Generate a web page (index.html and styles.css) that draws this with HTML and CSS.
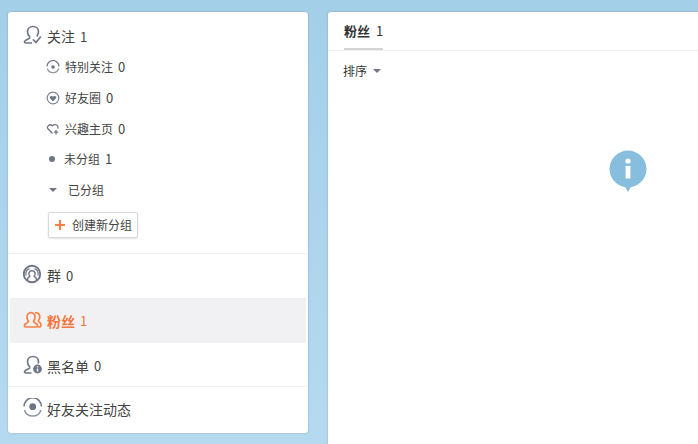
FILE: index.html
```html
<!DOCTYPE html>
<html lang="zh-CN">
<head>
    <meta charset="UTF-8">
    <title>粉丝</title>
    <link rel="stylesheet" href="styles.css">
</head>
<body>
    <div class="page">
        <!-- Left menu -->
        <div class="side">
            <div class="group follow-group">
                <div class="item">
                    <svg class="icon" width="22" height="22" viewBox="0 0 22 22" fill="none" stroke="#6d7587" stroke-width="1.700"><path d="M7 12.500C5.500 10.800 4.500 9 4.500 6.800 4.500 3.500 7 1.500 10 1.500s5.500 2 5.500 5.300c0 1.700-.6 3.200-1.700 4.700"/><path d="M7 12.500c0 1.500-5.500 2-5.500 4.300 0 .9.600 1.200 1.500 1.200h6"/><path d="M10 14.300l3 3.200 4.800-6"/></svg>
                    <span>关注</span><span class="num">1</span>
                </div>
                <div class="sub">
                    <svg class="sub-icon" width="14" height="14" viewBox="0 0 14 14" fill="none" stroke="#6d7587" stroke-width="1.200"><path d="M1 6.500a6 6 0 0 1 12 0"/><path d="M12.700 8.500a6 6 0 0 1-11.400 0" stroke="#8f95a3"/><circle cx="7" cy="7" r="1.800" fill="#6d7587" stroke="none"/></svg>
                    <span>特别关注</span><span class="num">0</span>
                </div>
                <div class="sub">
                    <svg class="sub-icon" width="14" height="14" viewBox="0 0 14 14" fill="none" stroke="#7d8494" stroke-width="1.200"><circle cx="7" cy="7" r="5.800"/><path d="M7 10.500L4 7.300c-1.100-1.500 1-3.400 3-1.700 2-1.700 4.100.2 3 1.700z" fill="#6d7587" stroke="none"/></svg>
                    <span>好友圈</span><span class="num">0</span>
                </div>
                <div class="sub">
                    <svg class="sub-icon" width="14" height="14" viewBox="0 0 14 14" fill="none" stroke="#6d7587" stroke-width="1.300"><path d="M6.500 11.500L2 6.800C.3 4.500 3.600 1.200 6.500 3.800 9 1.200 12.800 3.500 11.800 6.500"/><path d="M10 8v4.500M7.800 10.200h4.400"/></svg>
                    <span>兴趣主页</span><span class="num">0</span>
                </div>
                <div class="sub">
                    <span class="dot"></span>
                    <span>未分组</span><span class="num">1</span>
                </div>
                <div class="sub">
                    <span class="caret caret-wide"></span>
                    <span>已分组</span>
                </div>
                <button class="new-group"><span class="plus"></span>创建新分组</button>
            </div>
            <div class="group mid-group">
                <div class="item qun">
                    <svg class="icon" width="22" height="22" viewBox="0 0 22 22" fill="none" stroke="#6d7587" stroke-width="1.500"><circle cx="9" cy="10" r="8.200" stroke-width="1.900"/><path d="M4.700 16c-.4-1.800.2-2.700 2-3.700-1.800-2.400-.7-5.500 2.300-5.500s4.100 3.100 2.300 5.500c1.800 1 2.400 1.900 2 3.700"/><path d="M3 11.500C2.500 8 4 5.300 6.500 4.700M15 11.500c.5-3.500-1-6.200-3.500-6.800" stroke-width="1.200"/></svg>
                    <span>群</span><span class="num">0</span>
                </div>
                <div class="item active">
                    <svg class="icon" width="22" height="22" viewBox="0 0 22 22" fill="none" stroke="#fb7f45" stroke-width="1.700"><path d="M5.500 11.500C4.500 10 4 8.800 4 7.200 4 4.500 5.800 2.700 8 2.700s4 1.800 4 4.500c0 1.600-.5 2.800-1.500 4.300 0 1.200 3 1.500 3.800 3 .5 1 .2 2.500-1 2.500H2.700c-1.200 0-1.500-1.500-1-2.500.8-1.500 3.800-1.800 3.800-3z"/><path d="M12 2.900c2.500-.7 4.800 1 4.800 3.900 0 1.700-.5 2.900-1.500 4.200 0 1 2 1.300 2.500 2.800.4 1.300 0 3.200-1.400 3.200h-1.400"/></svg>
                    <span class="bold">粉丝</span><span class="num">1</span>
                </div>
                <div class="item black">
                    <svg class="icon" width="22" height="22" viewBox="0 0 22 22" fill="none" stroke="#6d7587" stroke-width="1.700"><path d="M7 12.500C5.500 10.800 4.500 9 4.500 6.800 4.500 3.500 7 1.500 10 1.500s5.500 2 5.500 5.300c0 .6-.1 1.200-.3 1.700"/><path d="M7 12.500c0 1.500-5.500 2-5.500 4.300 0 .9.600 1.200 1.500 1.200h5.500"/><circle cx="14.500" cy="14" r="4.400" fill="#6d7587" stroke="none"/><path d="M14.500 13.600v3M14.500 11.200v1.300" stroke="#fff" stroke-width="1.400"/></svg>
                    <span>黑名单</span><span class="num">0</span>
                </div>
            </div>
            <div class="group">
                <div class="item last">
                    <svg class="icon" width="22" height="22" viewBox="0 0 22 22" fill="none" stroke="#6d7587" stroke-width="1.500"><path d="M1 8.500a8.700 8.700 0 0 1 17.400 0"/><path d="M18 12a8.700 8.700 0 0 1-16.600 0" stroke="#8f95a3"/><circle cx="9.700" cy="8.700" r="3.400" fill="#6d7587" stroke="none"/></svg>
                    <span>好友关注动态</span>
                </div>
            </div>
        </div>

        <!-- Right content -->
        <div class="main">
            <div class="tabs">
                <div class="tab"><span class="bold">粉丝</span><span class="num">1</span></div>
            </div>
            <div class="sort">排序<span class="caret"></span></div>
            <div class="empty">
                <svg width="38" height="42" viewBox="0 0 38 42"><path d="M15.500 35.700L19 42l3.500-6.300z" fill="#88bedd"/><circle cx="19" cy="19" r="18.500" fill="#88bedd"/><circle cx="19" cy="11" r="2.600" fill="#fff"/><rect x="16.600" y="16" width="4.800" height="12.500" fill="#fff"/></svg>
            </div>
        </div>
    </div>
</body>
</html>
```

FILE: styles.css
```css
html, body {
    height: 100%;
}

body {
    margin: 0;
    overflow: hidden;
    background: linear-gradient(180deg, #a3cfe9, #b5daf0);
    font-family: "Noto Sans CJK SC", "Open Sans", sans-serif;
    font-size: 12px;
    color: #444;
}

.page {
    display: flex;
    align-items: flex-start;
    gap: 20px;
    width: 720px;
    padding: 12px 0 0 8px;
}

/* Left menu */
.side {
    width: 300px;
    height: 421px;
    box-sizing: border-box;
    background: #fff;
    border-radius: 3px;
    box-shadow: 0 0 2px rgba(0, 0, 0, 0.25);
}

.group {
    border-bottom: 1px solid #f0f0f0;
}

.group:last-child {
    border-bottom: none;
}

.follow-group {
    height: 242px;
    padding-top: 2px;
    box-sizing: border-box;
}

.item {
    display: flex;
    align-items: center;
    height: 45px;
    margin: 0 2px;
    padding-left: 13px;
    font-size: 14px;
    color: #444;
}

.follow-group .item {
    height: 44px;
}

.qun {
    height: 42px;
    padding-bottom: 2px;
}

.black {
    height: 41px;
    padding-top: 2px;
}

.last {
    height: 44px;
}

.icon {
    margin-right: 2px;
    flex-shrink: 0;
}

.num {
    margin-left: 5px;
    font-size: 13px;
}

.bold {
    font-weight: bold;
}

.active {
    background: #f1f1f3;
    color: #f4773f;
}

.sub {
    display: flex;
    align-items: center;
    height: 31px;
    padding-left: 38px;
    color: #444;
}

.follow-group .sub:nth-child(2) {
    margin-top: -7px;
}

.follow-group .sub:nth-child(5) {
    margin-top: -1px;
}

.sub-icon {
    margin-right: 5px;
    flex-shrink: 0;
}

.dot {
    width: 6px;
    height: 6px;
    margin: 0 9px 0 3px;
    border-radius: 50%;
    background: #6d7587;
}

.caret {
    display: inline-block;
    width: 0;
    height: 0;
    margin-left: 6px;
    border-style: solid;
    border-width: 4px 4px 0;
    border-color: #6d7587 transparent transparent;
}

.caret-wide {
    margin: 0 11px 0 3px;
}

.new-group {
    display: flex;
    align-items: center;
    width: 90px;
    height: 26px;
    margin: 7px 0 0 40px;
    padding: 0 0 2px 6px;
    box-sizing: border-box;
    background: #fff;
    border: 1px solid #d9d9d9;
    border-radius: 2px;
    box-shadow: 0 1px 2px rgba(0, 0, 0, 0.12);
    font-family: inherit;
    font-size: 12px;
    color: #444;
}

.plus {
    width: 10px;
    height: 10px;
    margin: 2px 7px 0 0;
    background: linear-gradient(#fb7f45, #fb7f45) center / 100% 2px no-repeat,
                linear-gradient(#fb7f45, #fb7f45) center / 2px 100% no-repeat;
}

/* Right content */
.main {
    flex: 1;
    height: 440px;
    background: #fff;
    border-radius: 3px 0 0 0;
    box-shadow: 0 0 2px rgba(0, 0, 0, 0.25);
}

.tabs {
    height: 38px;
    padding-left: 16px;
    border-bottom: 1px solid #f0f0f0;
}

.tab {
    display: inline-block;
    height: 38px;
    line-height: 37px;
    box-sizing: border-box;
    border-bottom: 2px solid #d4d4d4;
    font-size: 13px;
    color: #333;
}

.tab .num {
    margin-left: 6px;
}

.sort {
    display: flex;
    align-items: center;
    height: 39px;
    padding-left: 15px;
    color: #333;
}

.empty {
    padding: 60px 0 0 281px;
}
```
